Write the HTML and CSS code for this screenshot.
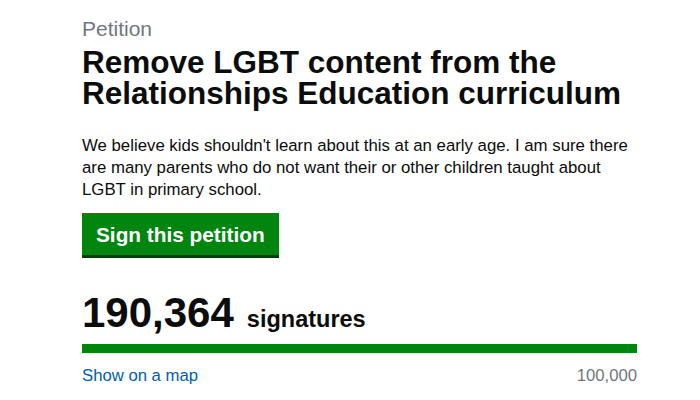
FILE: index.html
```html
<!DOCTYPE html>
<html lang="en">
<head>
    <meta charset="UTF-8">
    <meta name="viewport" content="width=device-width, initial-scale=1.0">
    <title>Petition</title>
    <link rel="stylesheet" href="styles.css">
</head>
<body>
    <div class="petition">
        <span class="caption">Petition</span>
        <h1 class="title">Remove LGBT content from the Relationships Education curriculum</h1>
        <p class="summary">We believe kids shouldn't learn about this at an early age. I am sure there are many parents who do not want their or other children taught about LGBT in primary school.</p>
        <div class="actions">
            <a class="sign-button" href="#">Sign this petition</a>
        </div>

        <div class="count">
            <span class="count-number">190,364</span>
            <span class="count-label">signatures</span>
        </div>
        <div class="progress">
            <div class="progress-fill" style="width: 100%"></div>
        </div>
        <div class="progress-meta">
            <a class="map-link" href="#">Show on a map</a>
            <span class="threshold">100,000</span>
        </div>
    </div>
</body>
</html>
```

FILE: styles.css
```css
* {
    margin: 0;
    padding: 0;
    box-sizing: border-box;
}

body {
    font-family: 'Liberation Sans', Arial, sans-serif;
    background: #fff;
    color: #0b0c0c;
}

.petition {
    width: 555px;
    margin-left: 82px;
    padding-top: 17px;
}

.caption {
    display: block;
    font-size: 21px;
    line-height: 24px;
    color: #6f777b;
}

.title {
    margin-top: 6px;
    font-size: 31.5px;
    line-height: 31px;
    font-weight: bold;
}

.summary {
    margin-top: 26px;
    font-size: 16.8px;
    line-height: 22px;
}

.actions {
    display: flex;
    margin-top: 12px;
}

.sign-button {
    padding: 10px 14px 8px;
    font-size: 20.8px;
    line-height: 24px;
    font-weight: bold;
    color: #fff;
    text-decoration: none;
    background-color: #00850f;
    box-shadow: 0 3px 0 #003d0a;
}

.count {
    display: flex;
    align-items: baseline;
    margin-top: 37px;
}

.count-number {
    font-size: 42px;
    line-height: 42px;
    font-weight: bold;
}

.count-label {
    margin-left: 13px;
    font-size: 23.5px;
    line-height: 1;
    font-weight: bold;
}

.progress {
    margin-top: 10px;
    height: 9px;
    background-color: #dee0e2;
}

.progress-fill {
    height: 100%;
    background-color: #00850f;
}

.progress-meta {
    display: flex;
    justify-content: space-between;
    margin-top: 13px;
    font-size: 16.7px;
    line-height: 20px;
}

.map-link {
    color: #005ea5;
    text-decoration: none;
}

.threshold {
    color: #6f777b;
}
```
